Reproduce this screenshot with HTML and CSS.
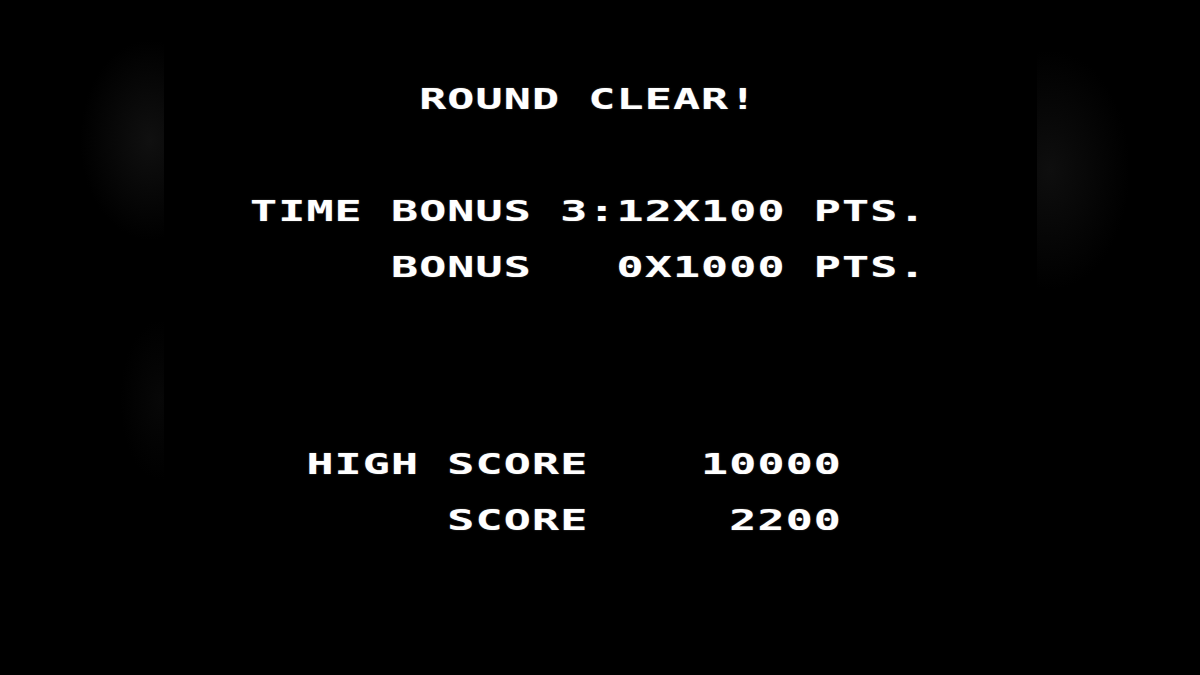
FILE: index.html
```html
<!DOCTYPE html>
<html lang="en">
<head>
    <meta charset="UTF-8">
    <meta name="viewport" content="width=device-width, initial-scale=1.0">
    <title>Round Clear</title>
    <link rel="stylesheet" href="styles.css">
</head>
<body>
    <div class="screen">
        <div class="line title">      ROUND CLEAR!</div>

        <div class="block bonus">
            <div class="line">TIME BONUS 3:12X100 PTS.</div>
            <div class="line">     BONUS   0X1000 PTS.</div>
        </div>

        <div class="block scores">
            <div class="line">  HIGH SCORE    10000</div>
            <div class="line">       SCORE     2200</div>
        </div>
    </div>
</body>
</html>
```

FILE: styles.css
```css
* {
    margin: 0;
    padding: 0;
    box-sizing: border-box;
}

html, body {
    height: 100%;
}

body {
    overflow: hidden;
    /* faint bezel reflections either side of the picture */
    background:
        radial-gradient(ellipse 70px 100px at 150px 140px, #101010, transparent),
        radial-gradient(ellipse 40px 80px at 160px 400px, #070707, transparent),
        radial-gradient(ellipse 80px 120px at 1050px 170px, #0e0e0e, transparent),
        #000;
}

.screen {
    width: 873px;
    height: 675px;
    margin: 0 auto;
    background: #000;
    padding: 85px 0 0 86px;
    color: #fff;
    font-family: "DejaVu Sans Mono", "Liberation Mono", monospace;
    font-weight: bold;
    font-size: 29px;
}

.block {
    display: flex;
    flex-direction: column;
    align-items: flex-start;
    gap: 28px;
}

/* each row is a fixed grid of characters, stretched wide like the arcade font */
.line {
    width: max-content;
    white-space: pre;
    line-height: 28px;
    height: 28px;
    letter-spacing: 0.73px;
    transform: scaleX(1.55);
    transform-origin: left center;
    text-shadow: 0 0 1px rgba(255, 255, 255, 0.5);
}

.bonus {
    margin-top: 84px;
}

.scores {
    margin-top: 169px;
}
```
